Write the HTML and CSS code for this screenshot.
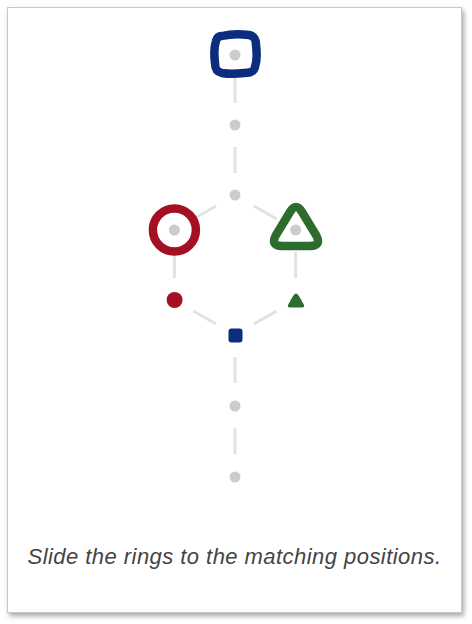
FILE: index.html
```html
<!DOCTYPE html>
<html>
<head>
<meta charset="utf-8">
<link rel="stylesheet" href="styles.css">
</head>
<body>
<div class="card">
  <svg class="diagram" viewBox="8 8 453 510" width="453" height="510">
    <g class="edges">
      <line x1="235" y1="77" x2="235" y2="103"/>
      <line x1="235" y1="147" x2="235" y2="173"/>
      <line x1="216" y1="206" x2="193.4" y2="219"/>
      <line x1="254" y1="206" x2="276.6" y2="219"/>
      <line x1="174.4" y1="252" x2="174.4" y2="278"/>
      <line x1="295.6" y1="252" x2="295.6" y2="278"/>
      <line x1="193.4" y1="311" x2="216" y2="324"/>
      <line x1="276.6" y1="311" x2="254" y2="324"/>
      <line x1="235" y1="357" x2="235" y2="383"/>
      <line x1="235" y1="428" x2="235" y2="454"/>
    </g>
    <g class="dots">
      <circle cx="235" cy="55" r="5.5"/>
      <circle cx="235" cy="125" r="5.5"/>
      <circle cx="235" cy="195" r="5.5"/>
      <circle cx="174.4" cy="230" r="5.5"/>
      <circle cx="295.6" cy="230" r="5.5"/>
      <circle cx="235" cy="406" r="5.5"/>
      <circle cx="235" cy="477" r="5.5"/>
    </g>
    <path class="ring blue" d="M 222 36 C 230 34, 242 34, 249 35 C 254 36, 256 39, 256 45 C 257 53, 257 61, 255 67 C 254 72, 250 73, 244 73 C 236 74, 228 74, 222 73 C 217 72, 215 69, 215 63 C 214 55, 214 47, 216 41 C 217 37, 219 36, 222 36 Z"/>
    <circle class="ring red" cx="174.4" cy="230" r="21.5"/>
    <path class="ring green" d="M 290 212 Q 296 202 302 212 L 316 235 Q 322 246 310 246 L 282 246 Q 270 246 276 235 Z"/>
    <circle class="fill-red" cx="174.6" cy="300" r="8"/>
    <path class="fill-green" d="M 293 296 Q 296 291 299 296 L 303.5 304 Q 305.5 307.5 301.5 307.5 L 290.5 307.5 Q 286.5 307.5 288.5 304 Z"/>
    <rect class="fill-blue" x="228.5" y="328.5" width="14" height="14" rx="3"/>
  </svg>
  <p class="caption">Slide the rings to the matching positions.</p>
</div>
</body>
</html>
```
FILE: styles.css
```css
html, body {
  margin: 0;
  padding: 0;
  background: #ffffff;
}
body {
  width: 472px;
  height: 624px;
  overflow: hidden;
}
.card {
  margin: 7px 0 0 7px;
  width: 453px;
  height: 604px;
  border: 1px solid #c8c8c8;
  background: #ffffff;
  box-shadow: 2px 3px 5px rgba(0, 0, 0, 0.35);
  display: flex;
  flex-direction: column;
}
.diagram {
  display: block;
}
.edges line {
  stroke: #e2e2e2;
  stroke-width: 3;
}
.dots circle {
  fill: #cccccc;
}
.ring {
  fill: none;
  stroke-width: 8.5;
  stroke-linejoin: round;
}
.ring.blue { stroke: #0c2c80; }
.ring.red { stroke: #a50f24; }
.ring.green { stroke: #2d6c2d; }
.fill-red { fill: #a50f24; }
.fill-green { fill: #2d6c2d; }
.fill-blue { fill: #0c2c80; }
.caption {
  margin: 27px 0 0 0;
  font-family: "Liberation Sans", Arial, sans-serif;
  font-style: italic;
  font-size: 22px;
  letter-spacing: 0.45px;
  line-height: 24px;
  color: #444444;
  text-align: center;
}
```
